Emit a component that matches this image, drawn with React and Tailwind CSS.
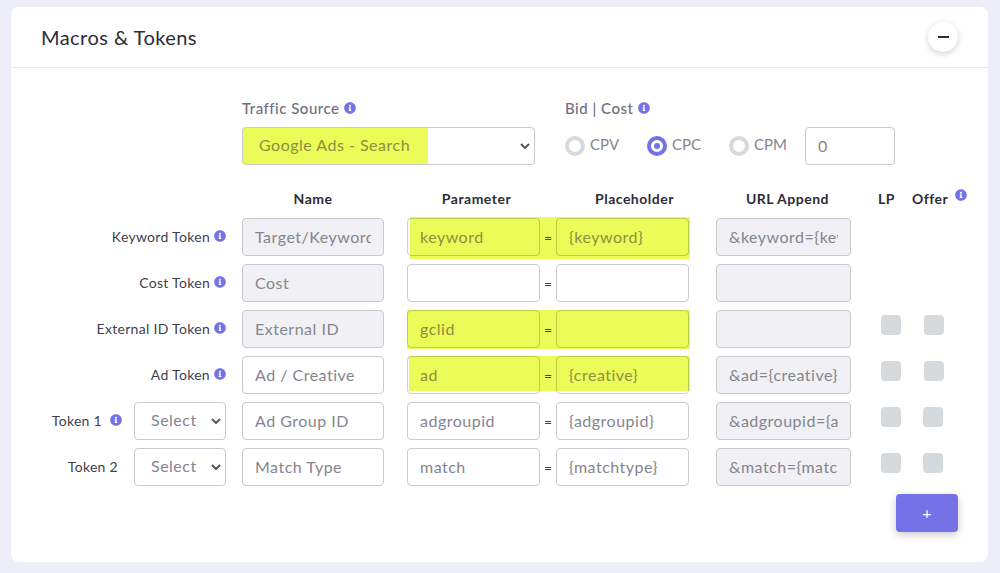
import React from 'react';
import { FaInfoCircle } from 'react-icons/fa';

const rows = [
  { label: 'Keyword Token', name: 'Target/Keyword', param: 'keyword', holder: '{keyword}', append: '&keyword={keyword}', locked: true, hl: 'left-[399px] w-[280px] top-[-1px] h-[42px]' },
  { label: 'Cost Token', name: 'Cost', param: '', holder: '', append: '', locked: true },
  { label: 'External ID Token', name: 'External ID', param: 'gclid', holder: '', append: '', locked: true, hl: 'left-[396px] w-[283px] top-0 h-[39px]', boxes: true },
  { label: 'Ad Token', name: 'Ad / Creative', param: 'ad', holder: '{creative}', append: '&ad={creative}', hl: 'left-[398px] w-[281px] top-0 h-[35px]', boxes: true },
  { label: 'Token 1', select: true, info: true, name: 'Ad Group ID', param: 'adgroupid', holder: '{adgroupid}', append: '&adgroupid={adgroupid}', boxes: true, offerShift: true },
  { label: 'Token 2', select: true, name: 'Match Type', param: 'match', holder: '{matchtype}', append: '&match={matchtype}', boxes: true, offerShift: true },
];

const fieldBase = 'h-[38px] rounded-[4px] border px-[12px] pb-[2px] text-[16px] tracking-[0.5px] outline-none';

function Info({ className = '' }) {
  return <FaInfoCircle className={`text-[12px] text-[#7571e6] ${className}`} />;
}

function Field({ value, width, locked, highlighted }) {
  let color = 'border-[#c9c9cf] bg-white text-[#85858f]';
  if (locked) color = 'border-[#c9c9cf] bg-[#f0f0f5] text-[#85858f]';
  if (highlighted) color = 'border-[#00000030] bg-transparent text-[#8b9140]';
  return <input readOnly value={value} className={`${fieldBase} ${width} ${color}`} />;
}

function Select({ value, className, textColor }) {
  return (
    <div className={`relative h-[38px] ${className}`}>
      <select className={`h-[38px] w-full appearance-none rounded-[4px] border border-[#c9c9cf] pb-[2px] pl-[16px] text-[16px] tracking-[0.5px] outline-none ${textColor}`}>
        <option>{value}</option>
      </select>
      <svg className="pointer-events-none absolute right-[5px] top-[16px]" width="10" height="6" viewBox="0 0 10 6" fill="none">
        <path d="M1 1l4 4 4-4" stroke="#55555f" strokeWidth="2" />
      </svg>
    </div>
  );
}

function TokenRow({ row }) {
  return (
    <div className="relative flex h-[38px] items-center">
      {row.hl && <div className={`absolute bg-[#ebfb57] ${row.hl}`}></div>}
      <div className="relative flex w-[215px] shrink-0 items-center justify-end text-[14px] tracking-[0.3px] text-[#3f3f4b]">
        {row.select ? (
          <>
            <span className={row.info ? 'mb-[2px]' : 'mb-[2px] mr-[4px]'}>{row.label}</span>
            {row.info && <Info className="mb-[2px] ml-[8px]" />}
            <Select value="Select" className="ml-[12px] w-[92px]" textColor="bg-white text-[#85858f]" />
          </>
        ) : (
          <>
            <span className="mb-[2px]">{row.label}</span>
            <Info className="mb-[2px] ml-[4px]" />
          </>
        )}
      </div>
      <div className="relative ml-[16px] flex items-center">
        <Field value={row.name} width="w-[142px]" locked={row.locked} />
        <div className="ml-[23px]">
          <Field value={row.param} width="w-[133px]" highlighted={!!row.hl} />
        </div>
        <span className="w-[16px] text-center text-[14px] text-[#3f3f4b]">=</span>
        <Field value={row.holder} width="w-[133px]" highlighted={!!row.hl} />
        <div className="ml-[27px]">
          <Field value={row.append} width="w-[135px]" locked />
        </div>
        {row.boxes && (
          <div className="mb-[8px] ml-[30px] flex gap-[23px]">
            <div className="h-[20px] w-[20px] rounded-[4px] bg-[#d6dadd]"></div>
            <div className={`h-[20px] w-[20px] rounded-[4px] bg-[#d6dadd] ${row.offerShift ? 'ml-[-1px]' : ''}`}></div>
          </div>
        )}
      </div>
    </div>
  );
}

function Radio({ label, checked }) {
  return (
    <label className="flex w-[82px] items-center">
      {checked ? (
        <span className="flex h-[20px] w-[20px] items-center justify-center rounded-full border-[4px] border-[#7571e6] bg-white">
          <span className="h-[6px] w-[6px] rounded-full bg-[#7571e6]"></span>
        </span>
      ) : (
        <span className="h-[20px] w-[20px] rounded-full border-[4px] border-[#d6dadd] bg-white"></span>
      )}
      <span className="mb-[3px] ml-[5px] text-[15px] text-[#85858f]">{label}</span>
    </label>
  );
}

export default function App() {
  return (
    <div className="min-h-[573px] bg-[#eeeef8] pb-[11px] pl-[11px] pr-[12px] pt-[7px] font-['Lato',sans-serif]">
      <div className="h-[555px] rounded-[8px] bg-white">
        <div className="flex h-[61px] items-center justify-between border-b border-[#e8e8ee] px-[30px]">
          <h1 className="text-[20px] font-normal tracking-[0.45px] text-[#2c2c38]">Macros &amp; Tokens</h1>
          <button className="flex h-[30px] w-[30px] items-center justify-center rounded-full bg-white shadow-[0_2px_6px_rgba(0,0,0,0.18)]">
            <span className="h-[2px] w-[11px] bg-[#2c2c38]"></span>
          </button>
        </div>

        <div className="pt-[30px]">
          <div className="ml-[231px] flex">
            <div className="w-[323px]">
              <div className="flex items-center gap-[5px] text-[15px] font-medium leading-[20px] tracking-[0.5px] text-[#6e6e7c]">
                Traffic Source <Info />
              </div>
              <div className="relative mt-[9px] h-[38px] w-[293px]">
                <div className="absolute left-0 top-0 h-[38px] w-[186px] rounded-l-[4px] bg-[#ebfb57]"></div>
                <Select value="Google Ads - Search" className="w-[293px]" textColor="bg-transparent text-[#8b9140]" />
              </div>
            </div>
            <div>
              <div className="flex items-center gap-[5px] text-[15px] font-medium leading-[20px] tracking-[0.5px] text-[#6e6e7c]">
                Bid | Cost <Info />
              </div>
              <div className="mt-[9px] flex h-[38px] items-center">
                <Radio label="CPV" />
                <Radio label="CPC" checked />
                <Radio label="CPM" />
                <input readOnly value="0" className={`${fieldBase} ml-[-6px] w-[90px] border-[#c9c9cf] bg-white text-[#85858f]`} />
              </div>
            </div>
          </div>

          <div className="mt-[23px] flex h-[20px] items-center text-[14px] font-bold tracking-[0.5px] text-[#2c2c38]">
            <span className="ml-[231px] w-[142px] text-center">Name</span>
            <span className="ml-[26px] w-[133px] text-center">Parameter</span>
            <span className="ml-[25px] w-[133px] text-center">Placeholder</span>
            <span className="ml-[19px] w-[135px] text-center">URL Append</span>
            <span className="ml-[23px] w-[17px] text-center">LP</span>
            <span className="ml-[17px]">Offer</span>
            <Info className="mb-[6px] ml-[7px]" />
          </div>

          <div className="mt-[10px] flex flex-col gap-[8px]">
            {rows.map((row) => (
              <TokenRow key={row.label} row={row} />
            ))}
          </div>

          <button className="ml-[885px] mt-[8px] flex h-[38px] w-[62px] items-center justify-center rounded-[4px] bg-[#7571e6] text-[16px] text-white shadow-[0_3px_8px_rgba(0,0,0,0.2)]">
            +
          </button>
        </div>
      </div>
    </div>
  );
}
